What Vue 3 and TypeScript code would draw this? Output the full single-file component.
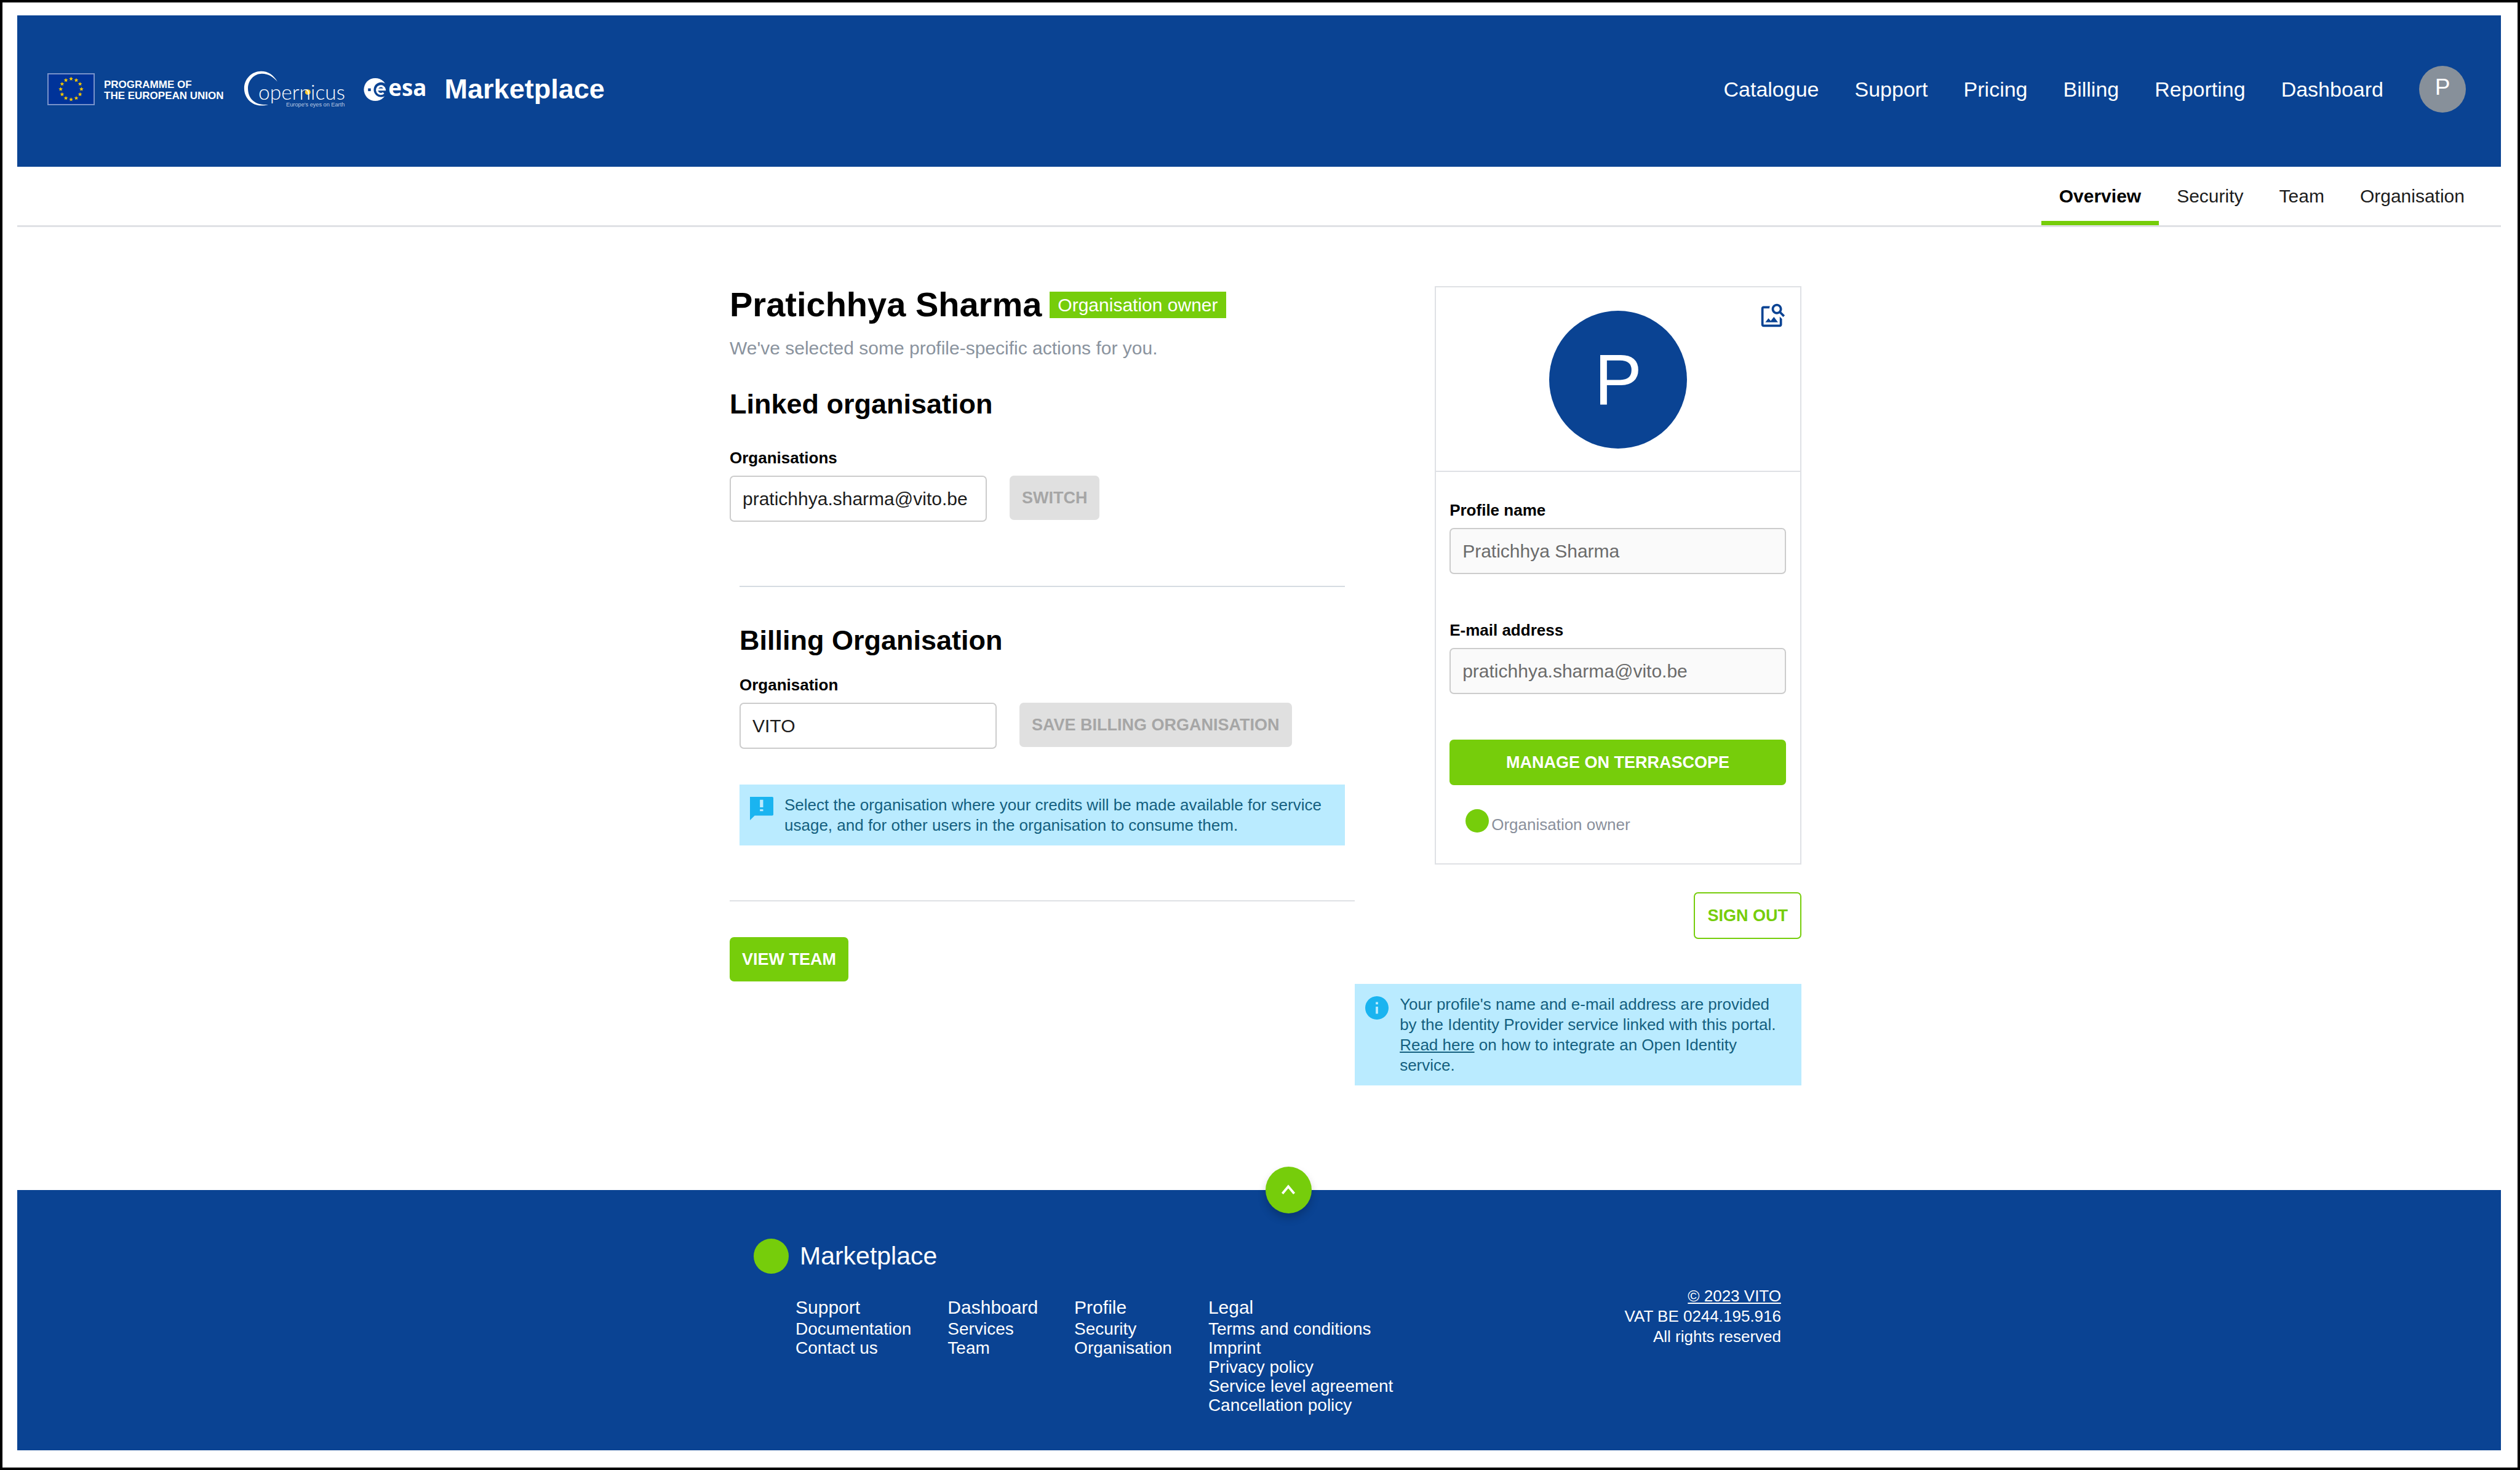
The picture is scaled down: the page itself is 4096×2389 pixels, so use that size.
<script setup lang="ts">
import { ref } from 'vue'

interface LinkColumn {
  title: string
  links: string[]
}

const mainLinks: string[] = ['Catalogue', 'Support', 'Pricing', 'Billing', 'Reporting', 'Dashboard']
const tabs: string[] = ['Overview', 'Security', 'Team', 'Organisation']
const activeTab = ref('Overview')

const linkedOrganisation = ref('pratichhya.sharma@vito.be')
const billingOrganisation = ref('VITO')

const footerColumns: LinkColumn[] = [
  { title: 'Support', links: ['Documentation', 'Contact us'] },
  { title: 'Dashboard', links: ['Services', 'Team'] },
  { title: 'Profile', links: ['Security', 'Organisation'] },
  {
    title: 'Legal',
    links: ['Terms and conditions', 'Imprint', 'Privacy policy', 'Service level agreement', 'Cancellation policy'],
  },
]

// Five-pointed star outline around a centre point
function star(cx: number, cy: number, r: number): string {
  return Array.from({ length: 10 }, (_, i) => {
    const radius = i % 2 === 0 ? r : r * 0.45
    const angle = (i * Math.PI) / 5 - Math.PI / 2
    return `${(cx + radius * Math.cos(angle)).toFixed(1)},${(cy + radius * Math.sin(angle)).toFixed(1)}`
  }).join(' ')
}

const flagStars: string[] = Array.from({ length: 12 }, (_, i) => {
  const angle = (i * Math.PI) / 6
  return star(162 + 71 * Math.cos(angle), 109 + 71 * Math.sin(angle), 15)
})
</script>

<template>
  <div class="page">
    <header class="topbar">
      <div class="brand">
        <svg class="flag" viewBox="0 0 324 219" aria-hidden="true">
          <rect x="4" y="4" width="316" height="211" fill="#003399" stroke="#7f97cc" stroke-width="8" />
          <polygon v-for="(points, i) in flagStars" :key="i" :points="points" fill="#f5c800" />
        </svg>
        <p class="programme">PROGRAMME OF<br />THE EUROPEAN UNION</p>
        <svg class="copernicus" viewBox="60 55 720 275" aria-label="Copernicus">
          <path
            d="M297 139C270 92 232 67 185 67C120 67 68 120 68 185C68 250 120 303 185 303C202 303 217 301 234 296C217 297 203 297 190 295C130 288 94 245 94 185C94 130 135 83 190 83C234 83 268 104 297 139Z"
            fill="#fff"
          />
          <circle cx="506" cy="210" r="19" fill="#fdc82f" />
          <text x="166" y="262" class="copernicus-name">opernicus</text>
          <text x="357" y="308" class="copernicus-tag">Europe's eyes on Earth</text>
        </svg>
        <svg class="esa" viewBox="885 65 450 250" aria-label="esa">
          <circle cx="970" cy="190" r="79" fill="#fff" />
          <circle cx="1010" cy="191" r="51" fill="#0a4393" />
          <path d="M984 190H1035A27 27 0 1 0 1027 213" fill="none" stroke="#fff" stroke-width="14" />
          <rect x="920" y="182" width="19" height="19" fill="#0a4393" />
          <text x="1060" y="236" class="esa-name">esa</text>
        </svg>
        <a class="brand-name" href="#">Marketplace</a>
      </div>
      <nav class="main-nav">
        <a v-for="item in mainLinks" :key="item" href="#">{{ item }}</a>
        <button type="button" class="avatar-small">P</button>
      </nav>
    </header>

    <nav class="tabs">
      <a
        v-for="tab in tabs"
        :key="tab"
        href="#"
        :class="{ active: tab === activeTab }"
        @click.prevent="activeTab = tab"
        >{{ tab }}</a
      >
    </nav>

    <main class="content">
      <section class="left">
        <div class="title-row">
          <h1>Pratichhya Sharma</h1>
          <span class="badge">Organisation owner</span>
        </div>
        <p class="intro">We've selected some profile-specific actions for you.</p>

        <h2 class="linked-title">Linked organisation</h2>
        <label class="linked-label" for="organisations">Organisations</label>
        <div class="field-row">
          <input id="organisations" v-model="linkedOrganisation" type="text" />
          <button type="button" class="btn" disabled>SWITCH</button>
        </div>

        <div class="billing">
          <hr />
          <h2>Billing Organisation</h2>
          <label for="billing-organisation">Organisation</label>
          <div class="field-row">
            <input id="billing-organisation" v-model="billingOrganisation" type="text" />
            <button type="button" class="btn" disabled>SAVE BILLING ORGANISATION</button>
          </div>
          <div class="notice">
            <svg viewBox="2 2 20 20" aria-hidden="true">
              <path
                d="M21 2H2V22l4-4h15c.6 0 1-.4 1-1V3c0-.6-.4-1-1-1zm-7.700 12.200h-2.800v-1.500h2.800v1.500zm0-3.200h-2.800V4.500h2.800V11z"
              />
            </svg>
            <p>
              Select the organisation where your credits will be made available for service usage, and for other users
              in the organisation to consume them.
            </p>
          </div>
        </div>

        <hr class="team-rule" />
        <button type="button" class="btn primary">VIEW TEAM</button>
      </section>

      <aside class="right">
        <div class="card">
          <div class="card-top">
            <div class="avatar-large">P</div>
            <button type="button" class="change-picture" aria-label="Change picture">
              <svg viewBox="0 0 24 24" aria-hidden="true">
                <path
                  d="M18 13v7H4V6h5.020c.050-.710.220-1.380.480-2H4c-1.100 0-2 .900-2 2v14c0 1.100.900 2 2 2h14c1.100 0 2-.900 2-2v-5l-2-2zm-1.500 5h-11l2.750-3.530 1.960 2.360 2.750-3.540L16.500 18zm2.800-9.110c.440-.700.700-1.510.700-2.390C20 4.010 17.990 2 15.500 2S11 4.010 11 6.500s2.010 4.500 4.490 4.500c.880 0 1.700-.260 2.390-.700L21 13.420 22.420 12 19.300 8.890zM15.500 9C14.120 9 13 7.880 13 6.500S14.120 4 15.500 4 18 5.120 18 6.500 16.880 9 15.500 9z"
                />
              </svg>
            </button>
          </div>
          <div class="card-body">
            <label for="profile-name">Profile name</label>
            <input id="profile-name" type="text" value="Pratichhya Sharma" disabled />
            <label class="email-label" for="email">E-mail address</label>
            <input id="email" type="email" value="pratichhya.sharma@vito.be" disabled />
            <button type="button" class="btn primary manage">MANAGE ON TERRASCOPE</button>
            <p class="role"><span class="role-dot"></span>Organisation owner</p>
          </div>
        </div>
        <button type="button" class="btn outline">SIGN OUT</button>
        <div class="notice">
          <svg viewBox="2 2 20 20" aria-hidden="true">
            <path
              d="M12 2C6.480 2 2 6.480 2 12s4.480 10 10 10 10-4.480 10-10S17.520 2 12 2zm1 15h-2v-6h2v6zm0-8h-2V7h2v2z"
            />
          </svg>
          <p>
            Your profile's name and e-mail address are provided by the Identity Provider service linked with this
            portal. <a href="#">Read here</a> on how to integrate an Open Identity service.
          </p>
        </div>
      </aside>
    </main>

    <footer class="footer">
      <button type="button" class="to-top" aria-label="Back to top">
        <svg viewBox="0 0 24 24" aria-hidden="true">
          <path d="M7 15l5-6 5 6" />
        </svg>
      </button>
      <div class="footer-inner">
        <div>
          <p class="footer-brand"><span class="footer-dot"></span>Marketplace</p>
          <div class="footer-columns">
            <section v-for="column in footerColumns" :key="column.title">
              <h3>{{ column.title }}</h3>
              <ul>
                <li v-for="link in column.links" :key="link">
                  <a href="#">{{ link }}</a>
                </li>
              </ul>
            </section>
          </div>
        </div>
        <p class="legal"><a href="#">© 2023 VITO</a><br />VAT BE 0244.195.916<br />All rights reserved</p>
      </div>
    </footer>
  </div>
</template>

<style>
body {
  margin: 0;
  background: #fff;
}
</style>

<style scoped>
.page {
  --blue: #0a4393;
  --green: #76cd0b;
  --line: #dfe1e5;
  display: flex;
  flex-direction: column;
  box-sizing: border-box;
  min-height: 100vh;
  padding: 21px 27px 28px 24px;
  border: 4px solid #000;
  background: #fff;
  color: #000;
  font-family: 'Liberation Sans', Arial, sans-serif;
  font-size: 30px;
}

h1,
h2,
h3,
p,
ul {
  margin: 0;
  padding: 0;
}

a {
  color: inherit;
  text-decoration: none;
}

button,
input {
  box-sizing: border-box;
  margin: 0;
  font-family: inherit;
}

/* Header */
.topbar {
  display: flex;
  align-items: center;
  justify-content: space-between;
  box-sizing: border-box;
  height: 246px;
  padding: 0 57px 6px 49px;
  background: var(--blue);
  color: #fff;
}

.brand {
  display: flex;
  align-items: center;
}

.flag {
  width: 77px;
  height: 52px;
}

.programme {
  margin: 3px 31px 0 15px;
  font-size: 17px;
  font-weight: 700;
  line-height: 18px;
}

.copernicus {
  width: 170px;
  height: 65px;
}

.copernicus-name {
  fill: #fff;
  font-family: Lato, sans-serif;
  font-size: 142px;
  font-weight: 300;
}

.copernicus-tag {
  fill: #b9c8e2;
  font-size: 39px;
}

.esa {
  width: 106px;
  height: 59px;
  margin-left: 25px;
}

.esa-name {
  fill: #fff;
  font-family: 'Open Sans', sans-serif;
  font-size: 156px;
  font-weight: 700;
}

.brand-name {
  margin-left: 27px;
  font-size: 45px;
  font-weight: 700;
}

.main-nav {
  display: flex;
  align-items: center;
  gap: 58px;
  font-size: 34px;
}

.avatar-small {
  width: 76px;
  height: 76px;
  padding: 0 0 6px;
  border: 0;
  border-radius: 50%;
  background: #87909a;
  color: #fff;
  font-size: 37px;
}

/* Profile tabs */
.tabs {
  display: flex;
  justify-content: flex-end;
  padding-right: 30px;
  border-bottom: 3px solid var(--line);
  color: #1c1c1c;
}

.tabs a {
  box-sizing: border-box;
  height: 95px;
  padding: 0 29px;
  line-height: 95px;
}

.tabs .active {
  border-bottom: 7px solid var(--green);
  color: #000;
  font-weight: 700;
}

/* Content */
.content {
  display: grid;
  flex: 1;
  grid-template-columns: 7fr 5fr;
  align-items: start;
  box-sizing: border-box;
  width: 100%;
  max-width: 1763px;
  margin: 0 auto;
  padding: 96px 0 170px 21px;
}

.title-row {
  display: flex;
  align-items: center;
  gap: 13px;
}

h1 {
  font-size: 56px;
  line-height: 60px;
}

.badge {
  padding: 0 13px;
  background: var(--green);
  color: #fff;
  line-height: 43px;
}

.intro {
  margin-top: 23px;
  color: #8a939e;
  line-height: 36px;
}

h2 {
  font-size: 45px;
  line-height: 52px;
}

.linked-title {
  margin: 47px 0 46px;
}

label {
  display: block;
  margin-bottom: 14px;
  font-size: 26px;
  font-weight: 700;
  line-height: 30px;
}

input {
  height: 75px;
  padding: 0 19px;
  border: 2px solid #ccc;
  border-radius: 7px;
  background: #fff;
  color: #1c1c1c;
  font-size: 30px;
}

input:disabled {
  background: #fafafa;
  color: #6b6b6b;
}

.field-row {
  display: flex;
  align-items: flex-start;
  gap: 37px;
}

.field-row input {
  width: 418px;
}

.btn {
  height: 72px;
  padding: 0 20px;
  border: 0;
  border-radius: 7px;
  font-size: 27px;
  font-weight: 700;
}

.btn:disabled {
  background: #e0e0e0;
  color: #a6a6a6;
}

.primary {
  background: var(--green);
  color: #fff;
}

.outline {
  height: 76px;
  border: 2px solid var(--green);
  background: #fff;
  color: var(--green);
}

hr {
  height: 2px;
  margin: 0;
  border: 0;
  background: #d5dce2;
}

.billing {
  margin: 104px 16px 0;
}

.billing h2 {
  margin: 61px 0 31px;
}

.billing .notice {
  margin-top: 58px;
}

.team-rule {
  margin: 89px 0 58px;
  background: var(--line);
}

.notice {
  display: flex;
  gap: 18px;
  padding: 17px 24px 16px 17px;
  background: #baebff;
  color: #14607f;
  font-size: 26px;
  line-height: 33px;
}

.notice svg {
  flex: none;
  width: 38px;
  height: 38px;
  margin-top: 3px;
  fill: #1ab4f0;
}

.notice a {
  text-decoration: underline;
}

/* Profile card */
.right {
  display: flex;
  flex-direction: column;
}

.card {
  margin-left: 130px;
  border: 2px solid var(--line);
}

.card-top {
  position: relative;
  display: flex;
  justify-content: center;
  padding: 38px 0 36px;
  border-bottom: 2px solid var(--line);
}

.avatar-large {
  width: 224px;
  border-radius: 50%;
  background: var(--blue);
  color: #fff;
  font-size: 116px;
  line-height: 224px;
  text-align: center;
}

.change-picture {
  position: absolute;
  top: 23px;
  right: 22px;
  width: 45px;
  height: 45px;
  padding: 0;
  border: 0;
  background: none;
}

.change-picture svg {
  display: block;
  fill: var(--blue);
}

.card-body {
  display: flex;
  flex-direction: column;
  padding: 47px 23px 50px 22px;
}

.card-body .email-label {
  margin-top: 76px;
}

.manage {
  height: 74px;
  margin-top: 74px;
}

.role {
  display: flex;
  align-items: flex-end;
  gap: 4px;
  margin: 39px 0 0 26px;
  color: #8a909c;
  font-size: 26px;
  line-height: 26px;
}

.role-dot {
  width: 38px;
  height: 38px;
  border-radius: 50%;
  background: var(--green);
}

.right .outline {
  align-self: flex-end;
  margin: 45px 0 73px;
}

/* Footer */
.footer {
  position: relative;
  background: var(--blue);
  color: #fff;
}

.to-top {
  position: absolute;
  top: -38px;
  left: calc(50% + 10px);
  display: flex;
  align-items: center;
  justify-content: center;
  width: 75px;
  height: 76px;
  padding: 0;
  border: 0;
  border-radius: 50%;
  background: var(--green);
  box-shadow: 0 8px 14px rgba(0, 0, 0, 0.2);
}

.to-top svg {
  width: 46px;
  height: 46px;
  fill: none;
  stroke: #fff;
  stroke-width: 2;
}

.footer-inner {
  display: flex;
  align-items: flex-start;
  justify-content: space-between;
  box-sizing: border-box;
  max-width: 1763px;
  margin: 0 auto;
  padding: 79px 33px 58px 60px;
}

.footer-brand {
  display: flex;
  align-items: center;
  gap: 18px;
  font-size: 41px;
  line-height: 57px;
}

.footer-dot {
  width: 57px;
  height: 57px;
  border-radius: 50%;
  background: var(--green);
}

.footer-columns {
  display: flex;
  gap: 59px;
  margin: 38px 0 0 68px;
}

h3 {
  margin-bottom: 2px;
  font-size: 30px;
  font-weight: 400;
  line-height: 34px;
}

ul {
  list-style: none;
  font-size: 28px;
  line-height: 31px;
}

.legal {
  margin-top: 77px;
  font-size: 26px;
  line-height: 33px;
  text-align: right;
}

.legal a {
  text-decoration: underline;
}
</style>
